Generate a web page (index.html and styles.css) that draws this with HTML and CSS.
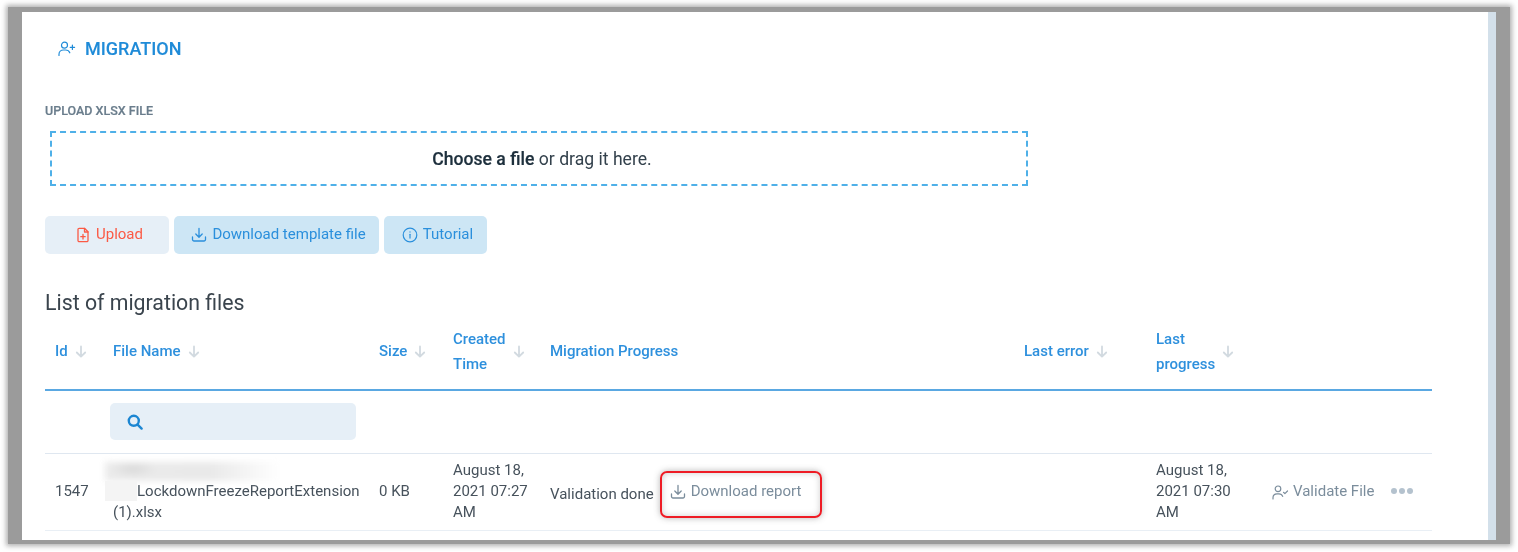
FILE: index.html
```html
<!DOCTYPE html>
<html lang="en">
<head>
<meta charset="utf-8">
<title>Migration</title>
<link rel="stylesheet" href="styles.css">
</head>
<body>
<div class="frame">
  <main class="panel">
    <h1 class="page-title">
      <svg class="icon-title" viewBox="0 0 18 16" fill="none" stroke="#1f8bd8" stroke-width="1.2" stroke-linecap="round"><circle cx="6.5" cy="4.2" r="3"/><path d="M1 14.5v-1.2c0-2.6 2-4.3 4.4-4.3h2.2c1.9 0 3.5 1 4.2 2.8"/><path d="M12.2 6.3h4.4M14.4 4.1v4.4"/></svg>
      <span>MIGRATION</span>
    </h1>
    <label class="field-label">UPLOAD XLSX FILE</label>
    <div class="dropzone"><strong>Choose a file</strong>&nbsp;or drag it here.</div>
    <div class="buttons">
      <button class="btn btn-upload">
        <svg class="icon" viewBox="0 0 16 16" fill="none" stroke="#fb5a45" stroke-width="1.3" stroke-linejoin="round" stroke-linecap="round"><path d="M3 2.5a1.2 1.2 0 0 1 1.2-1.2h5.3l3.5 3.5v8.7a1.2 1.2 0 0 1-1.2 1.2H4.200a1.200 1.200 0 0 1-1.200-1.200z"/><path d="M9.500 1.500v3.500h3.500M8 7.500v4.500M5.800 9.700h4.400"/></svg>
        Upload
      </button>
      <button class="btn btn-blue btn-template">
        <svg class="icon" viewBox="0 0 16 16" fill="none" stroke="#2a8fdc" stroke-width="1.300" stroke-linecap="round" stroke-linejoin="round"><path d="M8 1.500v8.500M4.800 7l3.200 3.200L11.200 7"/><path d="M1.500 10v2.500a1.500 1.500 0 0 0 1.500 1.500h10a1.500 1.500 0 0 0 1.500-1.500V10"/></svg>
        Download template file
      </button>
      <button class="btn btn-blue btn-tutorial">
        <svg class="icon" viewBox="0 0 16 16" fill="none" stroke="#2a8fdc" stroke-width="1.200" stroke-linecap="round"><circle cx="8" cy="8" r="6.800"/><path d="M8 7.300v3.800"/><path d="M8 4.800v.3"/></svg>
        Tutorial
      </button>
    </div>
    <h2 class="list-title">List of migration files</h2>
    <table class="files">
      <colgroup>
        <col class="c-id"><col class="c-name"><col class="c-size"><col class="c-created"><col class="c-progress"><col class="c-error"><col class="c-last"><col class="c-actions">
      </colgroup>
      <thead>
        <tr class="head-row">
          <th><span class="th-in">Id<svg class="sort" viewBox="0 0 12 14" fill="none" stroke="#d2dae0" stroke-width="1.800" stroke-linecap="round" stroke-linejoin="round"><path d="M6 1.500v10M1.800 7.500L6 11.700l4.200-4.200"/></svg></span></th>
          <th><span class="th-in">File Name<svg class="sort" viewBox="0 0 12 14" fill="none" stroke="#d2dae0" stroke-width="1.800" stroke-linecap="round" stroke-linejoin="round"><path d="M6 1.500v10M1.800 7.500L6 11.700l4.200-4.200"/></svg></span></th>
          <th><span class="th-in">Size<svg class="sort" viewBox="0 0 12 14" fill="none" stroke="#d2dae0" stroke-width="1.800" stroke-linecap="round" stroke-linejoin="round"><path d="M6 1.500v10M1.800 7.500L6 11.700l4.200-4.200"/></svg></span></th>
          <th><span class="th-in"><span>Created<br>Time</span><svg class="sort" viewBox="0 0 12 14" fill="none" stroke="#d2dae0" stroke-width="1.800" stroke-linecap="round" stroke-linejoin="round"><path d="M6 1.500v10M1.800 7.500L6 11.700l4.200-4.200"/></svg></span></th>
          <th>Migration Progress</th>
          <th><span class="th-in">Last error<svg class="sort" viewBox="0 0 12 14" fill="none" stroke="#d2dae0" stroke-width="1.800" stroke-linecap="round" stroke-linejoin="round"><path d="M6 1.500v10M1.800 7.500L6 11.700l4.200-4.200"/></svg></span></th>
          <th><span class="th-in"><span>Last<br>progress</span><svg class="sort" viewBox="0 0 12 14" fill="none" stroke="#d2dae0" stroke-width="1.800" stroke-linecap="round" stroke-linejoin="round"><path d="M6 1.500v10M1.800 7.500L6 11.700l4.200-4.200"/></svg></span></th>
          <th></th>
        </tr>
      </thead>
      <tbody>
        <tr class="search-row">
          <td></td>
          <td colspan="7" class="search-cell">
            <div class="search-box">
              <svg class="icon-search" viewBox="0 0 16 16" fill="none" stroke="#1c86d2" stroke-width="2.400" stroke-linecap="round"><circle cx="6.800" cy="6.800" r="5"/><path d="M10.600 10.600l4 4"/></svg>
            </div>
          </td>
        </tr>
        <tr class="data-row">
          <td>1547</td>
          <td class="name-cell"><span class="redacted"></span><span class="redacted-left"></span><span class="name-text">LockdownFreezeReportExtension (1).xlsx</span></td>
          <td>0 KB</td>
          <td class="date-cell">August 18, 2021 07:27 AM</td>
          <td>
            <div class="progress">
              <span class="progress-text">Validation done</span>
              <span class="report-box">
                <svg class="icon icon-muted" viewBox="0 0 16 16" fill="none" stroke="#7b8d9c" stroke-width="1.300" stroke-linecap="round" stroke-linejoin="round"><path d="M8 1.500v8.500M4.800 7l3.200 3.200L11.200 7"/><path d="M1.500 10v2.500a1.500 1.500 0 0 0 1.500 1.500h10a1.500 1.500 0 0 0 1.500-1.500V10"/></svg>
                Download report
              </span>
            </div>
          </td>
          <td></td>
          <td class="date-cell">August 18, 2021 07:30 AM</td>
          <td>
            <div class="actions">
              <span class="validate">
                <svg class="icon-user" viewBox="0 0 17 15" fill="none" stroke="#7b8d9c" stroke-width="1.200" stroke-linecap="round" stroke-linejoin="round"><circle cx="6" cy="3.800" r="2.800"/><path d="M1 14v-1.200c0-2.400 1.800-4 4-4h2c1.700 0 3.100 1 3.700 2.600"/><path d="M11.500 7.300l1.400 1.300 2.600-2.600"/></svg>
                Validate File
              </span>
              <span class="dots"><i></i><i></i><i></i></span>
            </div>
          </td>
        </tr>
      </tbody>
    </table>
  </main>
</div>
</body>
</html>
```

FILE: styles.css
```css
* { box-sizing: border-box; }
html, body { margin: 0; padding: 0; background: #fff; }
body { font-family: Roboto, "Liberation Sans", sans-serif; color: #47525c; font-size: 15px; height: 552px; overflow: hidden; }

.frame {
  margin: 7px 8px 0;
  height: 537px;
  width: 1502px;
  padding: 5px 14px 4px;
  background: #9b9b9b;
  box-shadow: 0 0 5px 2px rgba(150,150,150,.75);
}
.panel {
  height: 528px;
  background: #fff;
  border-right: 8px solid #d3e0ea;
  padding: 25px 56px 0 23px;
  overflow: hidden;
  filter: blur(.4px);
}
.page-title {
  margin: 0 0 0 13px;
  display: flex;
  align-items: center;
  gap: 9px;
  font-size: 18px;
  line-height: 24px;
  font-weight: 500;
  color: #1f8bd8;
  -webkit-text-stroke: .1px #1f8bd8;
}
.icon-title { width: 18px; height: 16px; }
.field-label {
  display: block;
  margin-top: 43px;
  font-size: 12.5px;
  line-height: 14px;
  font-weight: 500;
  color: #6a7d8c;
  -webkit-text-stroke: .2px #6a7d8c;
}
.dropzone {
  margin: 13px 0 0 5px;
  width: 978px;
  height: 55px;
  padding-left: 6px;
  border: 2px dashed #4fb0e8;
  display: flex;
  align-items: center;
  justify-content: center;
  font-size: 17.6px;
  color: #33414c;
}
.dropzone strong { font-weight: 500; color: #1d2f3c; -webkit-text-stroke: .2px #1d2f3c; }
.buttons { display: flex; gap: 5px; margin-top: 30px; }
.btn {
  height: 38px;
  border: 0;
  border-radius: 5px;
  display: inline-flex;
  align-items: center;
  justify-content: center;
  gap: 5px;
  padding: 0 0 2px 4px;
  font: 400 15px Roboto, sans-serif;
}
.icon { width: 16px; height: 16px; flex: none; margin-top: 2px; }
.btn-upload { width: 124px; background: #e6eff7; color: #fb5a45; }
.btn-blue { background: #cde6f5; color: #2a8fdc; }
.btn-template { width: 205px; }
.btn-tutorial { width: 103px; }
.list-title {
  margin: 36px 0 0;
  font-size: 21.3px;
  line-height: 26px;
  font-weight: 400;
  color: #3a444d;
}
.files { width: 1387px; border-collapse: separate; border-spacing: 0; table-layout: fixed; margin-top: 6px; }
.c-id { width: 58px; }
.c-name { width: 266px; }
.c-size { width: 74px; }
.c-created { width: 97px; }
.c-progress { width: 474px; }
.c-error { width: 132px; }
.c-last { width: 116px; }
.c-actions { width: 170px; }

.head-row { height: 69px; }
.files th {
  padding: 0 0 8px 10px;
  text-align: left;
  font-size: 15px;
  line-height: 25px;
  font-weight: 500;
  color: #2e90dd;
  border-bottom: 2px solid #5aa8e2;
}
.th-in { display: inline-flex; align-items: center; gap: 7px; }
.sort { width: 12px; height: 14px; flex: none; }
.search-row { height: 63px; }
.search-row td { border-bottom: 1px solid #dfe7f0; }
.search-row .search-cell { padding: 0 0 1px; }
.search-box {
  width: 246px;
  height: 37px;
  margin-left: 7px;
  border-radius: 5px;
  background: #e6eff7;
  display: flex;
  align-items: center;
  padding-left: 17px;
}
.icon-search { width: 16px; height: 16px; }
.data-row { height: 77px; }
.data-row td { padding: 0 0 2px 10px; line-height: 21px; vertical-align: middle; position: relative; border-bottom: 1px solid #e9eff5; }
.data-row .date-cell { padding-right: 12px; }
.name-cell { white-space: normal; }
.name-text { display: block; text-indent: 24px; margin-top: 22px; margin-right: -2px; }
.redacted {
  position: absolute;
  left: 2px; top: 8px;
  width: 175px; height: 19px;
  background: radial-gradient(ellipse 24px 8px at 28px 7px, #d8d8d8, transparent), linear-gradient(90deg, #ebebeb, #e9e9e9 60%, #fff);
  filter: blur(3px);
}
.redacted-left {
  position: absolute;
  left: 2px; top: 27px;
  width: 32px; height: 20px;
  background: #f4f4f4;
}
.progress { display: flex; align-items: flex-start; }
.progress-text { margin-top: 7px; white-space: nowrap; }
.report-box {
  display: inline-flex;
  align-items: flex-start;
  gap: 5px;
  width: 162px;
  height: 47px;
  margin: -6px 0 -12px 6px;
  padding: 8px 0 0 8px;
  border: 2px solid #ee1c25;
  border-radius: 7px;
  box-shadow: 0 0 6px rgba(90,90,90,.45), inset 0 0 6px rgba(90,90,90,.3);
  color: #7b8d9c;
  white-space: nowrap;
}
.icon-muted { margin-top: 3px; }
.actions { display: flex; align-items: center; }
.validate { display: inline-flex; align-items: center; gap: 4px; color: #7b8d9c; white-space: nowrap; }
.icon-user { width: 17px; height: 15px; margin-top: 2px; }
.dots { display: inline-flex; gap: 2px; margin-left: 17px; }
.dots i { width: 6px; height: 6px; border-radius: 50%; background: #b4c2ce; }
```
